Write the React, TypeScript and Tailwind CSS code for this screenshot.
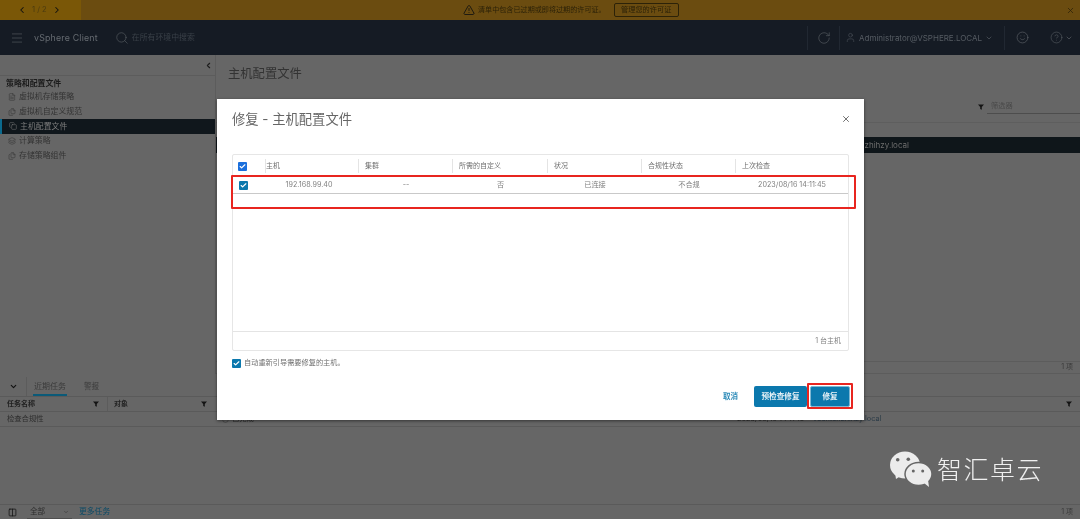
import { Menu, Search, RotateCw, User, ChevronDown, ChevronLeft, ChevronRight, X, Smile, CircleHelp, TriangleAlert, Check, Columns2, FileText, Files, Copy, Layers, CircleCheck } from "lucide-react";

const font = "font-['Inter','Noto_Sans_CJK_SC',sans-serif]";

function Tree({ icon, label, active }: { icon: React.ReactNode; label: string; active?: boolean }) {
  return (
    <div className={`flex h-[14.6px] items-center gap-[3px] text-[7.9px] ${active ? "border-l-2 border-[#0b6a8e] bg-[#10171c] pl-[7px] text-[#7d7d7d]" : "pl-[8px] text-[#333333]"}`}>
      {icon}
      <span>{label}</span>
    </div>
  );
}

function Cb({ bright }: { bright?: boolean }) {
  return (
    <span className={`flex h-[9px] w-[9px] items-center justify-center rounded-[1px] ${bright ? "bg-[#1b6fdc]" : "bg-[#0b78ad]"}`}>
      <Check size={7} strokeWidth={4} color="#fff" />
    </span>
  );
}

function Funnel() {
  return (
    <svg width="6" height="6" viewBox="0 0 6 6">
      <path d="M0 .5h6L3.800 3v2.800L2.200 5V3z" fill="#141414" />
    </svg>
  );
}

function WeChat() {
  return (
    <svg width="42" height="36" viewBox="0 0 42 36">
      <ellipse cx="15" cy="14" rx="15" ry="13.500" fill="#ececec" />
      <path d="M5 22l1 6 6-4z" fill="#ececec" />
      <circle cx="7.700" cy="8.700" r="1.800" fill="#666" />
      <circle cx="18.300" cy="8.300" r="1.800" fill="#666" />
      <ellipse cx="28.500" cy="23" rx="13.500" ry="11.500" fill="#ececec" stroke="#666" strokeWidth="1.500" />
      <path d="M34 32l5 4-1-7z" fill="#ececec" />
      <circle cx="23.300" cy="20" r="1.500" fill="#666" />
      <circle cx="32.700" cy="20" r="1.500" fill="#666" />
    </svg>
  );
}

export default function App() {
  const cols = [
    { t: "主机", w: "w-[93px]" },
    { t: "集群", w: "w-[94px]" },
    { t: "所需的自定义", w: "w-[95px]" },
    { t: "状况", w: "w-[94px]" },
    { t: "合规性状态", w: "w-[94px]" },
    { t: "上次检查", w: "flex-1" },
  ];
  const vals = [
    { t: "192.168.99.40", w: "w-[93px] pr-[7px]" },
    { t: "--", w: "w-[94px]" },
    { t: "否", w: "w-[95px]" },
    { t: "已连接", w: "w-[94px]" },
    { t: "不合规", w: "w-[94px]" },
    { t: "2023/08/16 14:11:45", w: "flex-1" },
  ];
  return (
    <div className={`relative flex h-[519px] w-[1080px] flex-col overflow-hidden bg-[#666666] blur-[0.4px] ${font}`}>
      {/* licence banner */}
      <div className="flex h-[20px] shrink-0 items-center bg-[#6b4c10] text-[#2c2208]">
        <div className="flex h-full w-[81px] items-center gap-[5px] bg-[#7a5707] pl-[17px] text-[7.500px] text-[#4a3a10]">
          <ChevronLeft size={10} strokeWidth={2.5} color="#111" />
          <span>1 / 2</span>
          <ChevronRight size={10} strokeWidth={2.5} color="#111" />
        </div>
        <div className="ml-[382px] flex items-center gap-[3px] text-[7.100px]">
          <TriangleAlert size={12} color="#1e1a10" />
          <span>清单中包含已过期或即将过期的许可证。</span>
          <span className="ml-[5px] flex h-[14px] w-[65px] items-center justify-center rounded-[2px] border border-[#2c2208] text-[7.200px]">管理您的许可证</span>
        </div>
        <X size={9} color="#2c2208" className="ml-auto mr-[5px]" />
      </div>

      {/* header */}
      <div className="flex h-[35px] shrink-0 items-center bg-[#151b24] text-[#5d6268]">
        <Menu size={14} strokeWidth={1} className="ml-[10px]" />
        <span className="ml-[10px] text-[8.800px] tracking-[0.2px] text-[#666b71]">vSphere Client</span>
        <Search size={14} strokeWidth={1} className="ml-[17px]" />
        <span className="ml-[3px] text-[7.900px] text-[#3a4048]">在所有环境中搜索</span>
        <div className="ml-auto flex h-[24px] items-center">
          <div className="flex h-full w-[33px] items-center justify-center border-x border-[#212832]">
            <RotateCw size={14} strokeWidth={1} />
          </div>
          <div className="flex h-full w-[165px] items-center gap-[3px] border-r border-[#212832] pl-[5px] text-[8px] text-[#565c63]">
            <User size={11} strokeWidth={1.1} />
            <span>Administrator@VSPHERE.LOCAL</span>
            <ChevronDown size={8} />
          </div>
          <Smile size={13} strokeWidth={1.2} className="ml-[11px]" />
          <CircleHelp size={13} strokeWidth={1} className="ml-[21px]" />
          <ChevronDown size={8} className="ml-[2px] mr-[7px]" />
        </div>
      </div>

      {/* work area */}
      <div className="flex min-h-0 flex-1">
        <div className="w-[216px] shrink-0 border-r border-[#5c5c5c]">
          <div className="flex h-[21px] items-center justify-end border-b border-[#5c5c5c] pr-[2px]">
            <ChevronLeft size={9} strokeWidth={3} color="#1c1c1c" />
          </div>
          <div className="pl-[6px] pt-[1px] text-[7.900px] font-semibold leading-[12px] text-[#1c1c1c]">策略和配置文件</div>
          <div className="mt-[1px]">
            <Tree icon={<FileText size={8} strokeWidth={1.5} />} label="虚拟机存储策略" />
            <Tree icon={<Files size={8} strokeWidth={1.5} />} label="虚拟机自定义规范" />
            <Tree active icon={<Copy size={8} strokeWidth={1.5} />} label="主机配置文件" />
            <Tree icon={<Layers size={8} strokeWidth={1.5} />} label="计算策略" />
            <Tree icon={<Files size={8} strokeWidth={1.5} />} label="存储策略组件" />
          </div>
        </div>
        <div className="flex min-w-0 flex-1 flex-col">
          <div className="pl-[12px] pt-[10px] text-[12.300px] leading-[18px] text-[#333333]">主机配置文件</div>
          <div className="mt-[17px] flex items-center justify-end">
            <Funnel />
            <span className="ml-[3px] w-[93px] border-b border-[#4d4d4d] pb-[2px] pl-[4px] text-[7.200px] leading-[11px] text-[#4a4a4a]">筛选器</span>
          </div>
          <div className="mt-[8px] h-[15px] border-t border-[#5e5e5e]" />
          <div className="flex h-[16px] items-center justify-end bg-[#0f161a] pr-[171px] text-[8px] text-[#6d6d6d]">c.zhihzy.local</div>
          <div className="flex-1" />
          <div className="flex h-[13px] items-center justify-end border-y border-[#5c5c5c] pr-[7px] text-[7px] text-[#3a3a3a]">1 项</div>
        </div>
      </div>

      {/* recent tasks */}
      <div className="h-[145px] shrink-0 text-[7px] text-[#2d2d2d]">
        <div className="flex h-[23px] items-end border-b border-[#5a5a5a]">
          <div className="flex h-[19px] w-[27px] items-center justify-center border-r border-[#5c5c5c]">
            <ChevronDown size={9} strokeWidth={3} color="#111" />
          </div>
          <div className="ml-[6px] flex h-[19px] w-[34px] items-center justify-center border-b-2 border-[#0b5a78] text-[8px] text-[#3a3a3a]">近期任务</div>
          <div className="ml-[17px] flex h-[19px] items-center text-[7.600px] text-[#3a3a3a]">警报</div>
        </div>
        <div className="flex h-[15px] items-center border-b border-[#5a5a5a] font-semibold text-[#222]">
          <div className="flex h-full w-[108px] items-center justify-between border-r border-[#5c5c5c] pl-[7px] pr-[8px]">任务名称<Funnel /></div>
          <div className="flex h-full w-[106px] items-center justify-between pl-[6px] pr-[7px]">对象<Funnel /></div>
          <div className="ml-auto mr-[8px]"><Funnel /></div>
        </div>
        <div className="flex h-[15px] items-center border-b border-[#5a5a5a] pl-[7px] text-[7.300px]">
          <span className="w-[215px]">检查合规性</span>
          <CircleCheck size={7} strokeWidth={1.5} />
          <span className="ml-[3px] w-[505px]">已完成</span>
          <span className="w-[76px]">2023/08/16 14:11:15</span>
          <span className="text-[#2b3b47]">vcenter.zhihzy.local</span>
        </div>
        <div className="h-[77px]" />
        <div className="flex h-[15px] items-center border-t border-[#5a5a5a] pl-[8px]">
          <Columns2 size={9} color="#111" />
          <span className="ml-[10px] flex h-full w-[45px] items-center justify-between border-b border-[#4e4e4e] pl-[3px] pr-[3px] text-[7.600px]">全部<ChevronDown size={6} /></span>
          <span className="ml-[7px] text-[7.800px] text-[#0b4a66]">更多任务</span>
          <span className="ml-auto mr-[7px] text-[7px] text-[#3a3a3a]">1 项</span>
        </div>
      </div>

      {/* watermark */}
      <div className="absolute left-[890px] top-[451px] flex items-center gap-[5px] text-[25px] font-light leading-none tracking-[1.500px] text-[#f0f0f0]">
        <WeChat />
        <span className="pt-[2px]">智汇卓云</span>
      </div>

      {/* modal */}
      <div className="absolute left-[217px] top-[99px] flex h-[321px] w-[647px] flex-col bg-white shadow-[0_1px_3px_rgba(0,0,0,0.5)]">
        <div className="flex h-[40px] shrink-0 items-center justify-between pl-[15px] pr-[13px]">
          <span className="text-[13.300px] leading-[20px] text-[#666666]">修复 - 主机配置文件</span>
          <X size={10} color="#565656" />
        </div>
        <div className="mx-[15px] mt-[15px] flex h-[197px] flex-col rounded-[2px] border border-[#e6e6e6]">
          <div className="flex h-[22px] shrink-0 items-center text-[7px] text-[#707070]">
            <div className="flex w-[33px] items-center pl-[5px]"><Cb bright /></div>
            {cols.map((c, i) => (
              <div key={c.t} className={`flex h-[14px] items-center border-l border-[#e4e4e4] ${i === 0 ? "-ml-[1px]" : "pl-[6px]"} ${c.w}`}>{c.t}</div>
            ))}
          </div>
          <div className="flex h-[17px] shrink-0 items-center border-b border-[#c9c9c9] text-[7.200px] text-[#808080]">
            <div className="flex w-[33px] items-center pl-[6px]"><Cb /></div>
            {vals.map((v) => (
              <div key={v.t} className={`text-center ${v.w}`}>{v.t}</div>
            ))}
          </div>
          <div className="flex-1" />
          <div className="flex h-[19px] shrink-0 items-center justify-end border-t border-[#e4e4e4] pr-[7px] text-[7px] text-[#808080]">1 台主机</div>
        </div>
        <div className="ml-[15px] mt-[7px] flex h-[10px] items-center gap-[3px] text-[7.200px] text-[#707070]">
          <Cb />
          <span>自动重新引导需要修复的主机。</span>
        </div>
        <div className="mb-[13px] mr-[14px] mt-auto flex items-center justify-end">
          <span className="mr-[16px] text-[7.500px] font-semibold text-[#2b8ab8]">取消</span>
          <span className="flex h-[21px] w-[53px] items-center justify-center rounded-[2px] bg-[#0b78ad] text-[7.600px] font-semibold text-[#e8f2f7]">预检查修复</span>
          <span className="ml-[3px] flex h-[21px] w-[40px] items-center justify-center rounded-[2px] border border-[#7fb6d2] bg-[#0b78ad] text-[7.600px] font-semibold text-[#e8f2f7]">修复</span>
        </div>
      </div>

      {/* red annotations */}
      <div className="absolute left-[231px] top-[175px] h-[34px] w-[625px] rounded-[1px] border-2 border-[#e8251f]" />
      <div className="absolute left-[807px] top-[383px] h-[26px] w-[46px] rounded-[1px] border-2 border-[#e8251f]" />
    </div>
  );
}
